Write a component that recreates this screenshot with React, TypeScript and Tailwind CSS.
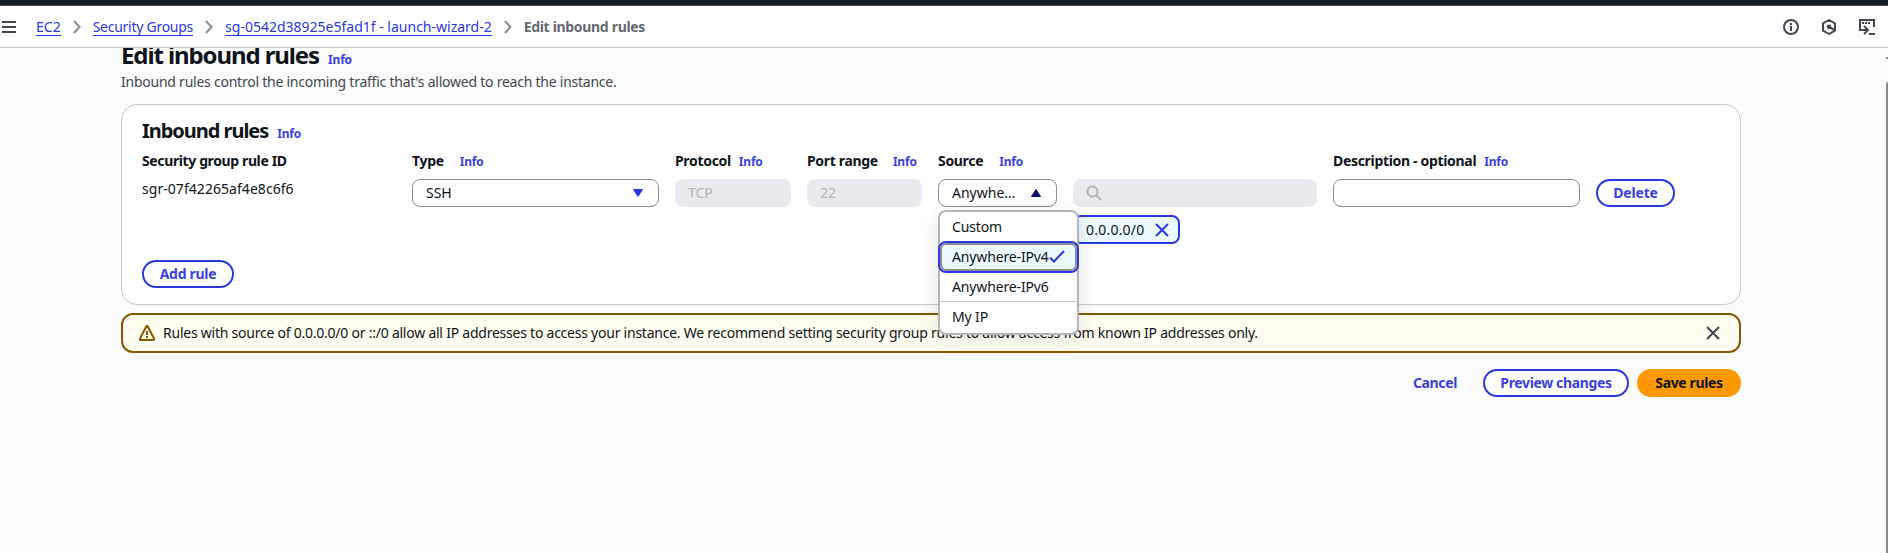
import React from "react";

const Info = ({ className = "" }: { className?: string }) => (
  <a className={`text-[12px] font-bold tracking-[-0.2px] text-[#3a3fe0] ${className}`}>Info</a>
);

const Chevron = () => (
  <svg width="8" height="14" viewBox="0 0 8 14" fill="none" stroke="#8c8c94" strokeWidth="2" className="mx-3 shrink-0">
    <path d="M1 1l5.5 6L1 13" />
  </svg>
);

const Close = ({ color, size = 16 }: { color: string; size?: number }) => (
  <svg width={size} height={size} viewBox="0 0 16 16" fill="none" stroke={color} strokeWidth="2">
    <path d="M2 2l12 12M14 2L2 14" />
  </svg>
);

const Crumb = ({ children, className = "" }: { children: React.ReactNode; className?: string }) => (
  <a className={`h-[19px] border-b border-[#2b38e0] leading-[19px] text-[#2b38e0] ${className}`}>{children}</a>
);

const Label = ({ text, gap }: { text: string; gap: string }) => (
  <div className="flex h-5 items-baseline whitespace-nowrap font-bold leading-5">
    <span className="tracking-[-0.32px]">{text}</span>
    <Info className={gap} />
  </div>
);

const Field = ({ children }: { children?: React.ReactNode }) => (
  <div className="mt-[8px] flex h-7 items-center rounded-lg bg-[#ebe8ef] px-[13px] text-[#b4b4bb]">{children}</div>
);

function SourceMenu() {
  return (
    <div className="absolute left-0 top-[59px] z-10 flex h-[125px] w-[141px] flex-col rounded-lg border-2 border-[#b4b4bb] bg-white tracking-[-0.14px] shadow-[0_4px_20px_1px_rgba(0,7,22,0.10)]">
      <div className="flex h-[29px] items-center px-3">Custom</div>
      <div className="-mx-[2px] flex h-8 items-center rounded-lg border-2 border-[#2b38e0]">
        <div className="flex h-7 grow items-center rounded-md border-2 border-[#8c8c94] bg-[#ecfaff] pl-[10px]">
          <span>Anywhere-IPv4</span>
          <svg width="16" height="16" viewBox="0 0 16 16" fill="none" stroke="#2b38e0" strokeWidth="2" className="shrink-0">
            <path d="M1 8.5l4 4L15 2" />
          </svg>
        </div>
      </div>
      <div className="flex h-[29px] items-center border-b border-[#c6c6cd] px-3">Anywhere-IPv6</div>
      <div className="flex h-[30px] items-center px-3">My IP</div>
    </div>
  );
}

export default function App() {
  return (
    <div className="relative flex h-[553px] w-[1888px] flex-col overflow-hidden bg-[#fcfcfd] font-['Noto_Sans','Open_Sans',sans-serif] text-[14px] leading-5 text-[#0f141a]">
      <div className="h-[6px] shrink-0 border-b border-[#424650] bg-[#161d2a]" />
      <header className="flex h-[42px] shrink-0 items-center border-b border-[#c6c6cd] bg-white pl-[2px]">
        <svg width="14" height="12" viewBox="0 0 14 12" fill="#424650" className="mr-5 shrink-0">
          <path d="M0 0h14v2H0zM0 5h14v2H0zM0 10h14v2H0z" />
        </svg>
        <Crumb>EC2</Crumb>
        <Chevron />
        <Crumb className="tracking-[-0.26px]">Security Groups</Crumb>
        <Chevron />
        <Crumb>sg-0542d38925e5fad1f - launch-wizard-2</Crumb>
        <Chevron />
        <span className="font-bold tracking-[-0.32px] text-[#656871]">Edit inbound rules</span>
        <div className="ml-auto flex items-center gap-[22px] pr-[13px]">
          <svg width="16" height="16" viewBox="0 0 16 16" fill="none" stroke="#424650" strokeWidth="2">
            <circle cx="8" cy="8" r="7" />
            <path d="M8 7v5M8 4v2" />
          </svg>
          <svg width="16" height="16" viewBox="0 0 16 16" fill="none" stroke="#424650" strokeWidth="2" strokeLinejoin="round">
            <path d="M8 1l6 3.4v7.2L8 15l-6-3.4V4.400z" />
            <path d="M8 8l5.500 3" />
            <circle cx="8" cy="7.700" r="1.200" fill="#424650" />
          </svg>
          <svg width="16" height="16" viewBox="0 0 16 16" fill="none" stroke="#424650" strokeWidth="2">
            <path d="M15 8V1H1v10h7M5 7l4 4-4 4M10 15h6" />
            <path d="M3 4h2M6 4h2M9 4h2" />
          </svg>
        </div>
      </header>
      <main className="flex h-[505px] flex-col overflow-hidden pl-[121px] pr-[147px]">
        <div className="-mt-[8px] flex h-[30px] shrink-0 items-baseline">
          <h1 className="text-[24px] font-bold leading-[30px] tracking-[-1.1px]">Edit inbound rules</h1>
          <Info className="ml-[9px]" />
        </div>
        <p className="mt-[2px] tracking-[-0.24px] text-[#424650]">Inbound rules control the incoming traffic that's allowed to reach the instance.</p>
        <section className="mt-[12px] flex h-[201px] shrink-0 flex-col rounded-2xl border border-[#c6c6cd] bg-white px-5">
          <div className="mt-[14px] flex h-6 items-baseline">
            <h2 className="text-[20px] font-bold leading-6 tracking-[-1.03px]">Inbound rules</h2>
            <Info className="ml-[9px]" />
          </div>
          <div className="mt-[8px] grid h-[104px] grid-cols-[254px_247px_116px_115px_119px_244px_247px_79px] gap-x-4">
            <div className="flex flex-col">
              <span className="font-bold tracking-[-0.38px]">Security group rule ID</span>
              <span className="mt-[8px] tracking-[0.05px]">sgr-07f42265af4e8c6f6</span>
            </div>
            <div>
              <Label text="Type" gap="ml-4" />
              <div className="mt-[8px] flex h-7 items-center justify-between rounded-lg border border-[#8c8c94] px-[13px] pr-[15px]">
                <span>SSH</span>
                <svg width="10" height="8" viewBox="0 0 10 8" fill="#2b38e0" stroke="#2b38e0" strokeWidth="1" strokeLinejoin="round">
                  <path d="M.5.5h9L5 7.500z" />
                </svg>
              </div>
            </div>
            <div>
              <Label text="Protocol" gap="ml-2" />
              <Field>TCP</Field>
            </div>
            <div>
              <Label text="Port range" gap="ml-[15px]" />
              <Field>22</Field>
            </div>
            <div className="relative">
              <Label text="Source" gap="ml-4" />
              <div className="mt-[8px] flex h-7 items-center justify-between rounded-lg border border-[#8c8c94] px-[13px] pr-[15px]">
                <span>Anywhe…</span>
                <svg width="10" height="8" viewBox="0 0 10 8" fill="#120f6b" stroke="#120f6b" strokeWidth="1" strokeLinejoin="round">
                  <path d="M.5 7.500h9L5 .5z" />
                </svg>
              </div>
              <SourceMenu />
            </div>
            <div className="pt-5">
              <Field>
                <svg width="16" height="16" viewBox="0 0 16 16" fill="none" stroke="#b4b4bb" strokeWidth="2">
                  <circle cx="6.500" cy="6.500" r="5" />
                  <path d="M10 10l5 5" />
                </svg>
              </Field>
              <div className="mt-2 flex h-[29px] w-[107px] items-center justify-between rounded-lg border-2 border-[#2b38e0] bg-[#ecfaff] pl-[11px] pr-[8px]">
                <span className="tracking-[0.22px]">0.0.0.0/0</span>
                <Close color="#2b38e0" />
              </div>
            </div>
            <div>
              <Label text="Description - optional" gap="ml-2" />
              <div className="mt-[8px] h-7 rounded-lg border border-[#8c8c94]" />
            </div>
            <div className="pt-7">
              <button className="h-7 w-[79px] rounded-full border-2 border-[#2b38e0] font-bold leading-5 tracking-[-0.2px] text-[#3a3fe0]">Delete</button>
            </div>
          </div>
          <button className="mt-[5px] h-7 w-[92px] shrink-0 rounded-full border-2 border-[#2b38e0] font-bold leading-5 tracking-[-0.3px] text-[#3a3fe0]">Add rule</button>
        </section>
        <div className="mt-2 flex h-10 shrink-0 items-center rounded-xl border-2 border-[#855900] bg-[#fffef0] pl-4 pr-[18px]">
          <svg width="16" height="16" viewBox="0 0 16 16" fill="none" stroke="#855900" strokeWidth="2" strokeLinejoin="round">
            <path d="M7.500 1h1L15 13.500V15H1v-1.500z" />
            <path d="M8 6v4M8 11v2" />
          </svg>
          <span className="ml-2 whitespace-nowrap tracking-[-0.236px]">Rules with source of 0.0.0.0/0 or ::/0 allow all IP addresses to access your instance. We recommend setting security group rules to allow access from known IP addresses only.</span>
          <div className="ml-auto"><Close color="#424650" /></div>
        </div>
        <div className="mt-4 flex h-7 shrink-0 justify-end font-bold tracking-[-0.36px]">
          <button className="mr-[26px] text-[#3a3fe0]">Cancel</button>
          <button className="mr-2 w-[146px] rounded-full border-2 border-[#2b38e0] bg-white leading-5 text-[#3a3fe0]">Preview changes</button>
          <button className="w-[104px] rounded-full bg-[#ff9900]">Save rules</button>
        </div>
      </main>
      <div className="absolute bottom-0 right-0 top-[57px] flex w-[2px] flex-col">
        <div className="h-[2px] bg-[#8a8a8a]" />
        <div className="mt-[23px] grow rounded-tl bg-[#8a8a8a]" />
      </div>
    </div>
  );
}
